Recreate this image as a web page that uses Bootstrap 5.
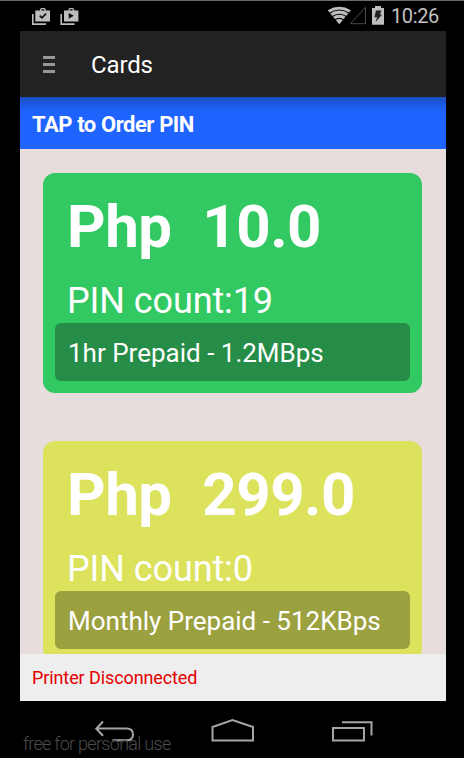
<!DOCTYPE html>
<html lang="en">
<head>
<meta charset="utf-8">
<meta name="viewport" content="width=device-width, initial-scale=1">
<title>Cards</title>
<link href="https://cdn.jsdelivr.net/npm/bootstrap@5.3.0/dist/css/bootstrap.min.css" rel="stylesheet">
<style>
html,body{height:100%}
body{background:#000;font-family:Roboto,sans-serif;overflow:hidden}
.device{height:758px;width:464px;padding:0 18px 0 20px;border-top:1px solid #6b6d6d}
.statusbar{height:30px;color:#c2c2c2;padding:0 7px 0 12px}
.clock{font-size:20px;line-height:30px;letter-spacing:-.35px}
.signals{margin-right:6px}
.appbar{height:66px;background:#222;color:#fff;padding-left:23px}
.appbar h1{font-size:24px;line-height:66px;margin:2px 0 0 36px;font-weight:400;letter-spacing:-.15px}
.order-bar{height:52px;background:linear-gradient(#1b4dbb 0,#1c57d8 5px,#1e62fb 14px,#1f64ff 18px);color:#fff;font-size:22px;line-height:55px;padding-left:12px;font-weight:700;letter-spacing:-.5px;word-spacing:.3px}
.plans{background:#e6dddc;height:505px;padding:24px 24px 0 23px}
.plan{height:220px;border:0;border-radius:12px;padding:12px;color:#fff;margin-bottom:48px}
.green{background:#32c963}
.lime{background:#dce25b}
.price{font-size:60px;line-height:83px;font-weight:700;white-space:pre;padding-left:12px;letter-spacing:-.5px;word-spacing:1px}
.pins{font-size:36px;line-height:43px;padding:12px 0 0 12px;letter-spacing:-.1px}
.desc{height:58px;border-radius:6px;font-size:26px;line-height:61px;padding-left:13px}
.green .desc{background:#268d48}
.lime .desc{background:#9ca13f}
.printer{height:47px;background:#eee;color:#e40000;font-size:18px;line-height:48px;padding-left:12px;letter-spacing:-.1px}
.softkeys{height:57px}
.watermark{left:3px;top:31px;font-size:18px;line-height:24px;color:#4c4c4c;font-weight:300;letter-spacing:-.7px}
</style>
</head>
<body>
<div class="device mx-auto">
  <div class="statusbar d-flex align-items-center">
    <svg width="50" height="30" viewBox="32 1 50 30" fill="#bdbdbd">
      <path d="M32 14h1.600v9.200H46v1.700H32z"/><path fill-rule="evenodd" d="M36.500 10.400H40V9.200L41.200 8h3.300L45.800 9.200v1.200H50v11.200H35.300V10.400zM41.400 9.300v1.100h3V9.300z"/>
      <path d="M39.700 15.600l2.300 2.300 4.100-4.300" fill="none" stroke="#111" stroke-width="1.700"/>
      <path d="M60.400 14H62v9.200h12.500v1.700H60.400z"/><path fill-rule="evenodd" d="M64 10.400h4.400V9.200L69.600 8h3.300l1.200 1.200v1.200h4.300v11.200H64zM69.700 9.300v1.100h3V9.300z"/>
      <path d="M68.700 12.900v5.800l5.200-2.900z" fill="#111"/>
    </svg>
    <svg class="signals ms-auto" width="58" height="30" viewBox="327 1 58 30">
      <path d="M327.700 10.300Q339.300 3.400 350.900 10.300L339.300 24.200z" fill="#bdbdbd"/>
      <path d="M329 13.500q10.300-7 20.600 0M331.800 16.800q7.500-5.200 15 0M334.800 20q4.500-3.200 9 0" fill="none" stroke="#000" stroke-width="1.100"/>
      <path d="M350.300 23.700L365.500 7.300v16.400z" fill="none" stroke="#4b4b4b"/>
      <path d="M372 8h3V6h6v2h3v16.700h-12z" fill="#bdbdbd"/><path d="M376 10.500h5.400l-1.500 4h2.200L375.600 22l1.500-4.700h-2.700z" fill="#222"/>
    </svg>
    <span class="clock">10:26</span>
  </div>
  <header class="appbar d-flex align-items-center">
    <svg width="12" height="18" fill="#969696"><path d="M0 1h12v3H0zM0 8h12v3H0zM0 15h12v3H0z"/></svg>
    <h1>Cards</h1>
  </header>
  <div class="order-bar">TAP to Order PIN</div>
  <main class="plans overflow-hidden">
    <div class="card plan green">
      <div class="price">Php  10.0</div>
      <div class="pins">PIN count:19</div>
      <div class="desc">1hr Prepaid - 1.2MBps</div>
    </div>
    <div class="card plan lime">
      <div class="price">Php  299.0</div>
      <div class="pins">PIN count:0</div>
      <div class="desc">Monthly Prepaid - 512KBps</div>
    </div>
  </main>
  <footer class="printer">Printer Disconnected</footer>
  <nav class="softkeys position-relative">
    <svg class="d-block" width="426" height="57" viewBox="20 701 426 57" fill="none" stroke="#a5a5a5" stroke-width="2">
      <path d="M103 721.500l-6.700 7.200 6.700 7M97 728.600h29.500q6.500 0 6.500 5.800t-6.500 5.800H112.500"/>
      <path d="M212.500 740.500V727l20-7 20.500 7v13.500z"/>
      <path d="M333 728h31v12.500h-31zM342 722.300h29.500v13.200"/>
    </svg>
    <span class="watermark position-absolute">free for personal use</span>
  </nav>
</div>
<script src="https://cdn.jsdelivr.net/npm/bootstrap@5.3.0/dist/js/bootstrap.bundle.min.js"></script>
</body>
</html>
